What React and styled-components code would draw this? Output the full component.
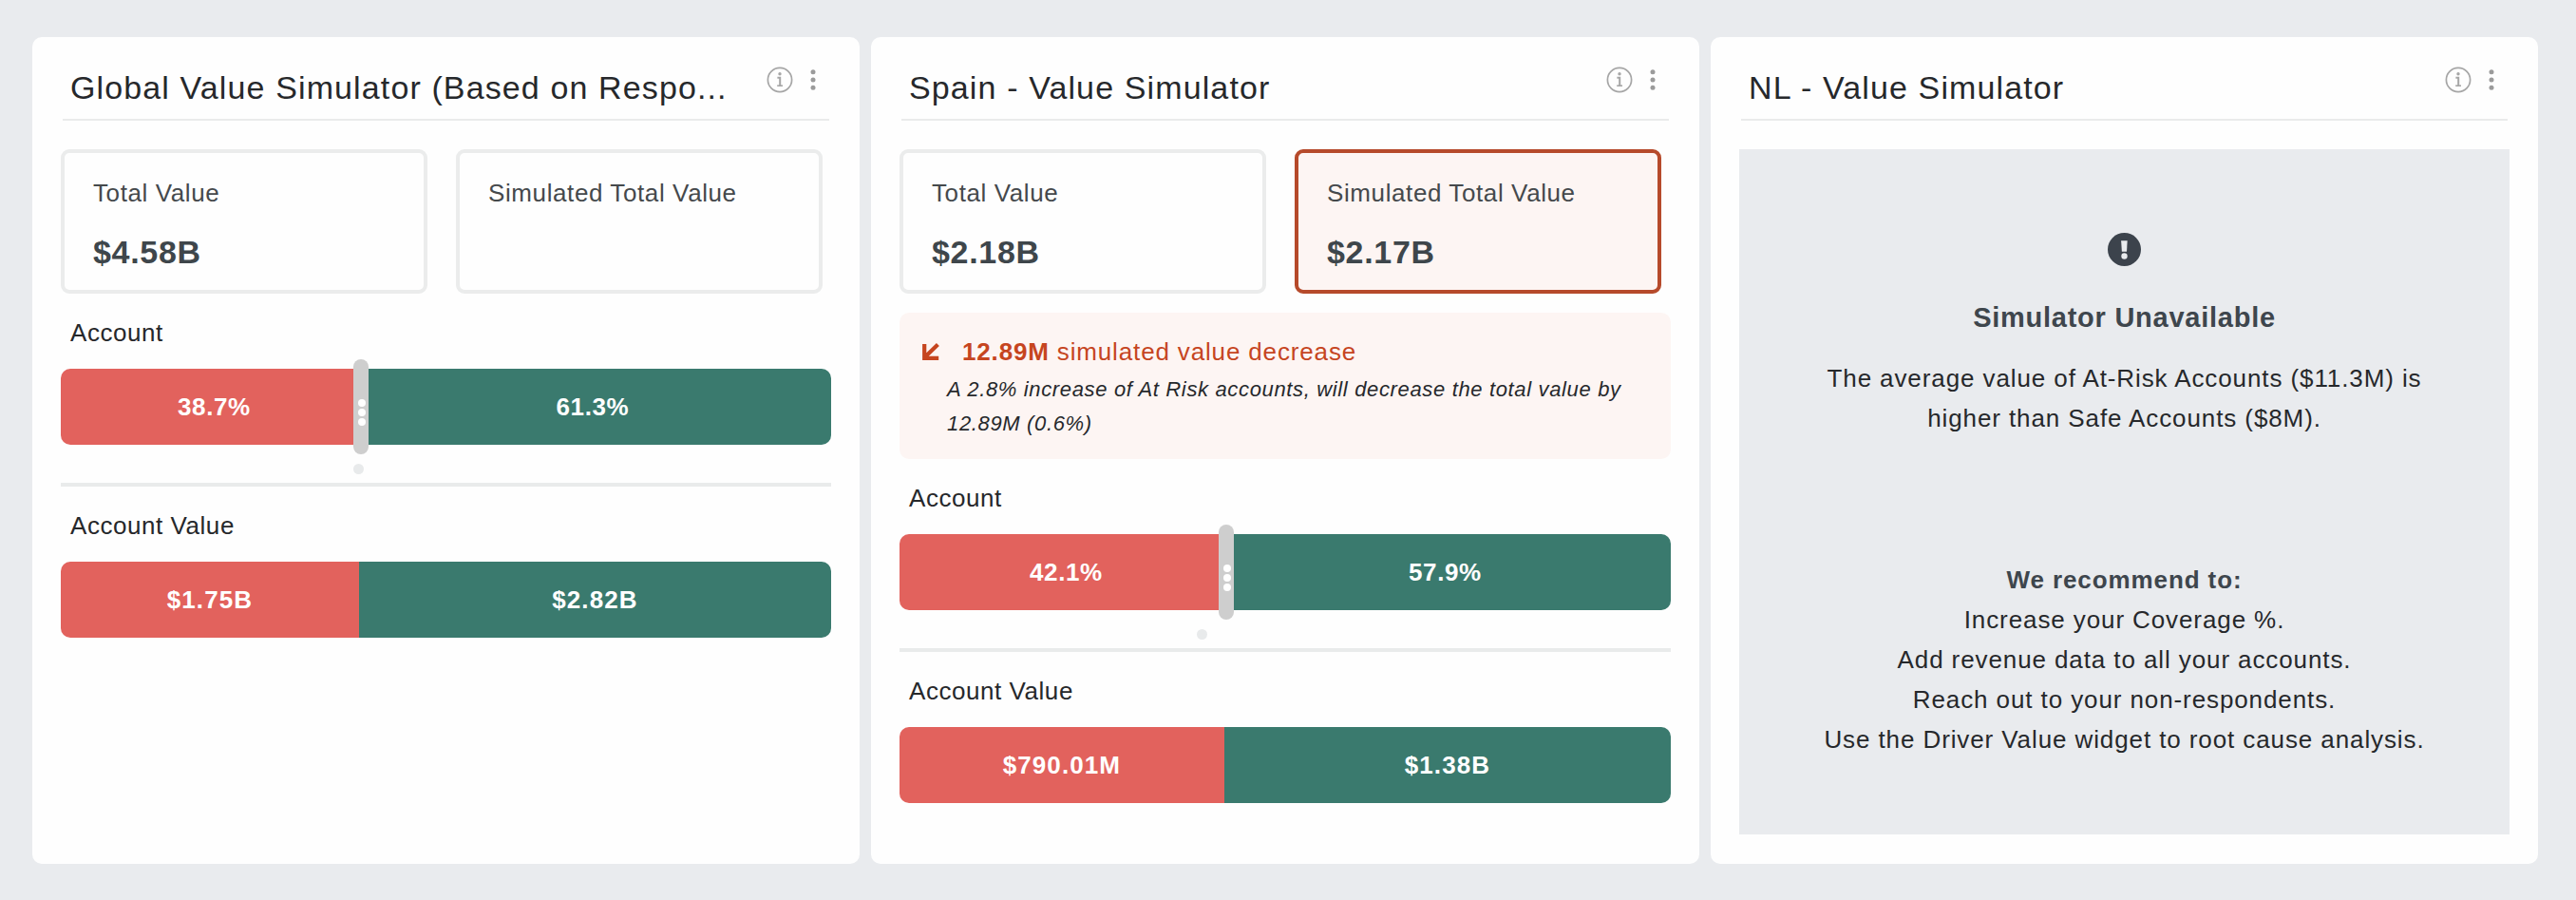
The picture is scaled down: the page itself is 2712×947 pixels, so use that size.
import styled, { createGlobalStyle } from "styled-components";

const GlobalStyle = createGlobalStyle`
  * {
    box-sizing: border-box;
  }

  body {
    margin: 0;
    background: #e9ebee;
    font-family: "Liberation Sans", Arial, sans-serif;
    color: #26282b;
  }
`;

const Dashboard = styled.main`
  display: grid;
  grid-template-columns: 871px 872px 871px;
  gap: 12px;
  height: 947px;
  padding: 39px 0 38px 34px;
`;

const Card = styled.section`
  display: flex;
  flex-direction: column;
  padding: 0 30px 31px;
  border-radius: 10px;
  background: #fefefe;
`;

const CardHeader = styled.header`
  display: flex;
  justify-content: space-between;
  align-items: flex-start;
  height: 88px;
  margin: 0 2px 30px;
  padding: 31px 14px 0 8px;
  border-bottom: 2px solid #eaebeb;
`;

const Title = styled.h2`
  margin: 0;
  font-size: 34px;
  font-weight: 400;
  line-height: 44px;
  letter-spacing: 1.12px;
  white-space: nowrap;
`;

const Actions = styled.div`
  display: flex;
  align-items: center;
  gap: 18px;
  height: 28px;
`;

const Kpis = styled.div`
  display: flex;
  gap: 30px;
`;

const Kpi = styled.div`
  width: 386px;
  height: 152px;
  padding: 27px 30px 0;
  border: 4px solid ${({ $active }) => ($active ? "#b64a2b" : "#ebecec")};
  border-radius: 9px;
  background: ${({ $active }) => ($active ? "#fdf5f3" : "#fefefe")};
`;

const KpiLabel = styled.div`
  color: #45494c;
  font-size: 26px;
  line-height: 30px;
  letter-spacing: 0.6px;
`;

const KpiValue = styled.div`
  margin-top: 27px;
  color: #3e464b;
  font-size: 34px;
  font-weight: 700;
  line-height: 40px;
  letter-spacing: 0.7px;
`;

const Notice = styled.div`
  height: 154px;
  margin-top: 20px;
  padding: 24px 20px 0 23px;
  border-radius: 10px;
  background: #fdf5f3;
`;

const NoticeTitle = styled.div`
  display: flex;
  align-items: center;
  color: #c6451f;
  font-size: 26px;
  line-height: 34px;
  letter-spacing: 0.85px;

  & svg {
    margin-right: 23px;
  }

  & b {
    margin-right: 8px;
  }
`;

const NoticeText = styled.p`
  margin: 5px 0 0 27px;
  font-size: 22px;
  font-style: italic;
  line-height: 36px;
  letter-spacing: 0.65px;
`;

const Section = styled.div`
  padding-top: 26px;

  & + & {
    margin-top: 40px;
    border-top: 4px solid #e9ebeb;
  }
`;

const SectionLabel = styled.div`
  margin: 0 0 23px 10px;
  font-size: 26px;
  line-height: 30px;
  letter-spacing: 0.55px;
`;

const Bar = styled.div`
  position: relative;
  display: flex;
  height: 80px;
`;

const Segment = styled.div`
  display: flex;
  align-items: center;
  justify-content: center;
  color: #ffffff;
  font-size: 26px;
  font-weight: 700;
  letter-spacing: ${({ $handle }) => ($handle ? "0.6px" : "1.1px")};
`;

const AtRisk = styled(Segment)`
  padding-left: ${({ $handle }) => ($handle ? "9px" : "0")};
  border-radius: 10px 0 0 10px;
  background: #e2625d;
`;

const Safe = styled(Segment)`
  flex: 1;
  padding-right: ${({ $handle }) => ($handle ? "5px" : "0")};
  border-radius: 0 10px 10px 0;
  background: #3a7a6e;
`;

const Handle = styled.div`
  position: absolute;
  top: -10px;
  display: flex;
  flex-direction: column;
  align-items: center;
  gap: 2px;
  width: 16px;
  height: 100px;
  margin-left: -6px;
  padding: 42px 0 0 3px;
  border-radius: 8px;
  background: #cecece;

  & span {
    width: 8px;
    height: 8px;
    border-radius: 50%;
    background: #ffffff;
  }
`;

const Origin = styled.div`
  position: absolute;
  top: 100px;
  width: 11px;
  height: 11px;
  margin-left: -6px;
  border-radius: 50%;
  background: #e8eaeb;
`;

const Unavailable = styled.div`
  flex: 1;
  display: flex;
  flex-direction: column;
  align-items: center;
  padding-top: 88px;
  background: #e9ebee;
  text-align: center;
  font-size: 26px;
  line-height: 42px;
  letter-spacing: 0.9px;

  & h3 {
    margin: 33px 0 22px;
    color: #3e464d;
    font-size: 29px;
    line-height: 42px;
    letter-spacing: 0.75px;
  }

  & p {
    width: 660px;
    margin: 0 0 128px;
  }

  & strong {
    color: #3e464d;
  }
`;

const InfoIcon = () => (
  <svg width="28" height="28" viewBox="0 0 28 28" fill="none">
    <circle cx="14" cy="14" r="12.6" stroke="#a6a6a6" strokeWidth="1.7" />
    <circle cx="14" cy="7.8" r="1.7" fill="#a6a6a6" />
    <path d="M11.4 11.8H14.2V20" stroke="#a6a6a6" strokeWidth="2" />
    <path d="M11.2 20.2H17" stroke="#a6a6a6" strokeWidth="1.6" />
  </svg>
);

const MoreIcon = () => (
  <svg width="6" height="24" viewBox="0 0 6 24" fill="#9b9b9b">
    <circle cx="3" cy="3.7" r="2.5" />
    <circle cx="3" cy="12" r="2.5" />
    <circle cx="3" cy="20.3" r="2.5" />
  </svg>
);

const ArrowIcon = () => (
  <svg
    width="20"
    height="20"
    viewBox="0 0 20 20"
    fill="none"
    stroke="#c6451f"
    strokeWidth="4.2"
  >
    <path d="M17.4 2.4L4 15.6M3.2 2V16.9H18.2" />
  </svg>
);

const AlertIcon = () => (
  <svg width="35" height="35" viewBox="0 0 35 35">
    <circle cx="17.5" cy="17.5" r="17.5" fill="#3c434c" />
    <path d="M14.1 8.2H20.7L20 19.7H14.9Z" fill="#e9ebee" />
    <circle cx="17.5" cy="24.5" r="3.2" fill="#e9ebee" />
  </svg>
);

const Header = ({ title }) => (
  <CardHeader>
    <Title>{title}</Title>
    <Actions>
      <InfoIcon />
      <MoreIcon />
    </Actions>
  </CardHeader>
);

const SplitBar = ({ percent, left, right, origin }) => (
  <Bar>
    <AtRisk $handle={origin} style={{ width: `${percent}%` }}>
      {left}
    </AtRisk>
    <Safe $handle={origin}>{right}</Safe>
    {origin && (
      <>
        <Handle style={{ left: `${percent}%` }}>
          <span />
          <span />
          <span />
        </Handle>
        <Origin style={{ left: `${origin}%` }} />
      </>
    )}
  </Bar>
);

const Simulator = ({
  title,
  total,
  simulated,
  percent,
  origin,
  atRisk,
  safe,
  notice,
}) => (
  <Card>
    <Header title={title} />
    <Kpis>
      <Kpi>
        <KpiLabel>Total Value</KpiLabel>
        <KpiValue>{total}</KpiValue>
      </Kpi>
      <Kpi $active={Boolean(simulated)}>
        <KpiLabel>Simulated Total Value</KpiLabel>
        <KpiValue>{simulated}</KpiValue>
      </Kpi>
    </Kpis>
    {notice && (
      <Notice>
        <NoticeTitle>
          <ArrowIcon />
          <b>{notice.amount}</b>
          {notice.label}
        </NoticeTitle>
        <NoticeText>{notice.text}</NoticeText>
      </Notice>
    )}
    <Section>
      <SectionLabel>Account</SectionLabel>
      <SplitBar
        percent={percent}
        origin={origin}
        left={`${percent}%`}
        right={`${(100 - percent).toFixed(1)}%`}
      />
    </Section>
    <Section>
      <SectionLabel>Account Value</SectionLabel>
      <SplitBar percent={percent} left={atRisk} right={safe} />
    </Section>
  </Card>
);

const App = () => {
  return (
    <>
      <GlobalStyle />
      <Dashboard>
        <Simulator
          title="Global Value Simulator (Based on Respo..."
          total="$4.58B"
          percent={38.7}
          origin={38.7}
          atRisk="$1.75B"
          safe="$2.82B"
        />
        <Simulator
          title="Spain - Value Simulator"
          total="$2.18B"
          simulated="$2.17B"
          percent={42.1}
          origin={39.3}
          atRisk="$790.01M"
          safe="$1.38B"
          notice={{
            amount: "12.89M",
            label: "simulated value decrease",
            text: "A 2.8% increase of At Risk accounts, will decrease the total value by 12.89M (0.6%)",
          }}
        />
        <Card>
          <Header title="NL - Value Simulator" />
          <Unavailable>
            <AlertIcon />
            <h3>Simulator Unavailable</h3>
            <p>
              The average value of At-Risk Accounts ($11.3M) is higher than
              Safe Accounts ($8M).
            </p>
            <strong>We recommend to:</strong>
            <span>Increase your Coverage %.</span>
            <span>Add revenue data to all your accounts.</span>
            <span>Reach out to your non-respondents.</span>
            <span>Use the Driver Value widget to root cause analysis.</span>
          </Unavailable>
        </Card>
      </Dashboard>
    </>
  );
};

export default App;
